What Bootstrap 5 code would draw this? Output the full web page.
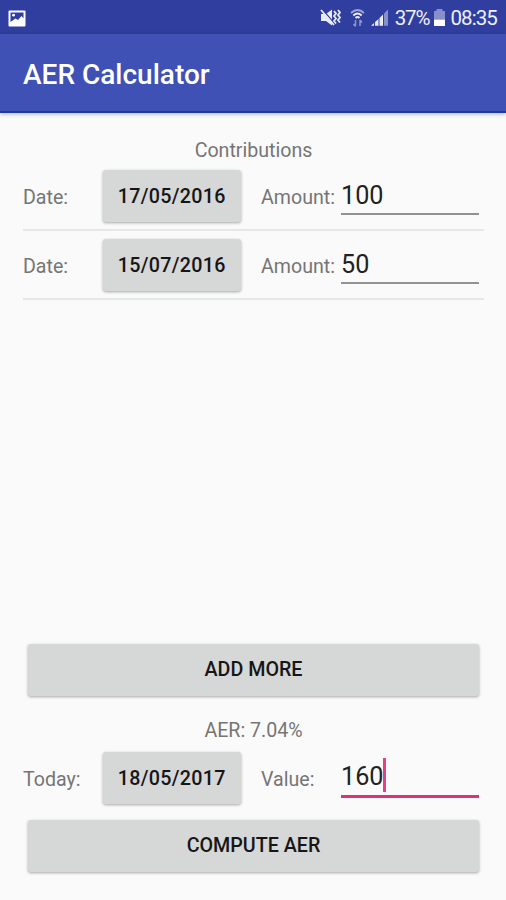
<!DOCTYPE html>
<html lang="en">
<head>
<meta charset="utf-8">
<meta name="viewport" content="width=device-width, initial-scale=1">
<title>AER Calculator</title>
<link href="https://cdn.jsdelivr.net/npm/bootstrap@5.3.0/dist/css/bootstrap.min.css" rel="stylesheet">
<style>
body{font-family:Roboto,"Liberation Sans",sans-serif;background:#fafafa;color:#757575;font-size:19.6px;line-height:24px}
.screen{height:900px;overflow:hidden}
.statusbar{height:34px;background:#303f9f;color:#eef0fa;font-size:20.5px;padding:2px 9px 0 8px;flex:none}
.pct{letter-spacing:-1.1px;margin-left:5px}
.batt{margin:0 4px 0 4px}
.clock{letter-spacing:-.9px}
.appbar{height:79px;background:#3f51b5;color:#fff;border-bottom:2px solid #1f3aa0;box-shadow:0 1px 4px rgba(0,0,0,.3);padding:5px 23px 0;flex:none}
.appbar h1{font-size:28px;font-weight:500;line-height:32px}
.content{padding:25px 22px 28px 23px}
.heading{height:24px;padding-top:1px}
.entry{height:69px;padding-top:8px;border-bottom:2px solid #e6e7e7}
.lbl{width:79.500px;padding-top:16px}
.lbl-amt{width:80px;margin-left:20px;padding-top:16px}
.raised{background:#d6d7d7!important;color:#161616!important;border:0;border-radius:3px;height:52px;font-size:19.7px;font-weight:500;box-shadow:0 1px 3px rgba(0,0,0,.34);padding:0 0 1px}
.datebtn{width:138.500px;letter-spacing:.3px;padding-top:3px}
.wide{margin:0 5px}
.field{width:138px;height:45px;border-bottom:2px solid #929292;color:#212121;font-size:25.2px;line-height:30px;padding-top:11px}
.field.active-field{border-bottom:3px solid #e0307a;height:46px;padding-top:10px}
.caret{width:3px;height:34px;background:#e83e85;margin-top:-4px}
.aer{margin-top:23px;height:33px}
.today{height:52px;margin-bottom:16px}
</style>
<script src="https://cdn.jsdelivr.net/npm/bootstrap@5.3.0/dist/js/bootstrap.bundle.min.js"></script>
</head>
<body>
<div class="screen d-flex flex-column">
  <div class="statusbar d-flex align-items-center">
    <svg width="18" height="17" viewBox="0 0 18 17"><rect x=".5" y=".5" width="17" height="16" rx="1" fill="#fff"/><path d="M2.500 2.500h13v6L13.500 6 10 10 7.500 8.500 2.500 12z" fill="#303f9f"/><circle cx="5.500" cy="5.200" r="1.400" fill="#fff"/></svg>
    <div class="ms-auto d-flex align-items-center">
      <svg width="70" height="22" viewBox="0 0 70 22" class="statusicons">
        <g transform="translate(1 0)">
          <path d="M0 7h5l6-4.500v16l-6-4.500H0z" fill="#e9ebf7"/>
          <path d="M1 2 14 17" stroke="#303f9f" stroke-width="1.200"/><path d="M0 3 13 18" stroke="#e9ebf7" stroke-width="1.800"/>
          <path d="m13 4 2 2.500-2 2.500 2 2.500-2 2.500 2 2.500M17 3l2 2.500-2 2.500 2 2.500-2 2.500 2 2.500" fill="none" stroke="#e9ebf7" stroke-width="1.800"/>
        </g>
        <g transform="translate(31 0)" fill="none" stroke="#e9ebf7" stroke-width="1.800">
          <path d="M0 6q6.500-6 13 0" opacity=".6"/><path d="M2.300 8.500q4.200-4 8.400 0M4.500 11q2-2 4 0"/>
          <path d="M4.500 13v6m-2-2 2 2.500M9 19v-6m0 0 2 2.500" stroke-width="1.500" opacity=".5"/>
        </g>
        <g transform="translate(50 0)"><path d="M1 18.800 4 16v2.800zM5 15l3.500-3v6.800H5zM9.500 11 13 7.500v11.300H9.500z" fill="#e9ebf7"/><path d="m14 6.500 4-4v16.300h-4z" fill="#8690cb"/></g>
      </svg>
      <span class="pct">37%</span>
      <svg width="13" height="20" viewBox="0 0 13 20" class="batt"><path d="M3.500 1h6v2H12v8.500H1V3h2.500z" fill="#8690cb"/><path d="M1 11.500h11V18H1z" fill="#fff"/></svg>
      <span class="clock">08:35</span>
    </div>
  </div>
  <header class="appbar d-flex align-items-center"><h1 class="m-0">AER Calculator</h1></header>
  <main class="content d-flex flex-column flex-grow-1">
    <div class="heading text-center">Contributions</div>
    <div class="entry d-flex align-items-start"><span class="lbl">Date:</span><button class="btn raised datebtn">17/05/2016</button><span class="lbl-amt">Amount:</span><div class="field">100</div></div>
    <div class="entry d-flex align-items-start"><span class="lbl">Date:</span><button class="btn raised datebtn">15/07/2016</button><span class="lbl-amt">Amount:</span><div class="field">50</div></div>
    <button class="btn raised wide mt-auto">ADD MORE</button>
    <div class="text-center aer">AER: 7.04%</div>
    <div class="today d-flex align-items-start"><span class="lbl">Today:</span><button class="btn raised datebtn">18/05/2017</button><span class="lbl-amt">Value:</span><div class="field active-field d-flex"><span>160</span><span class="caret"></span></div></div>
    <button class="btn raised wide compute">COMPUTE AER</button>
  </main>
</div>
</body>
</html>
